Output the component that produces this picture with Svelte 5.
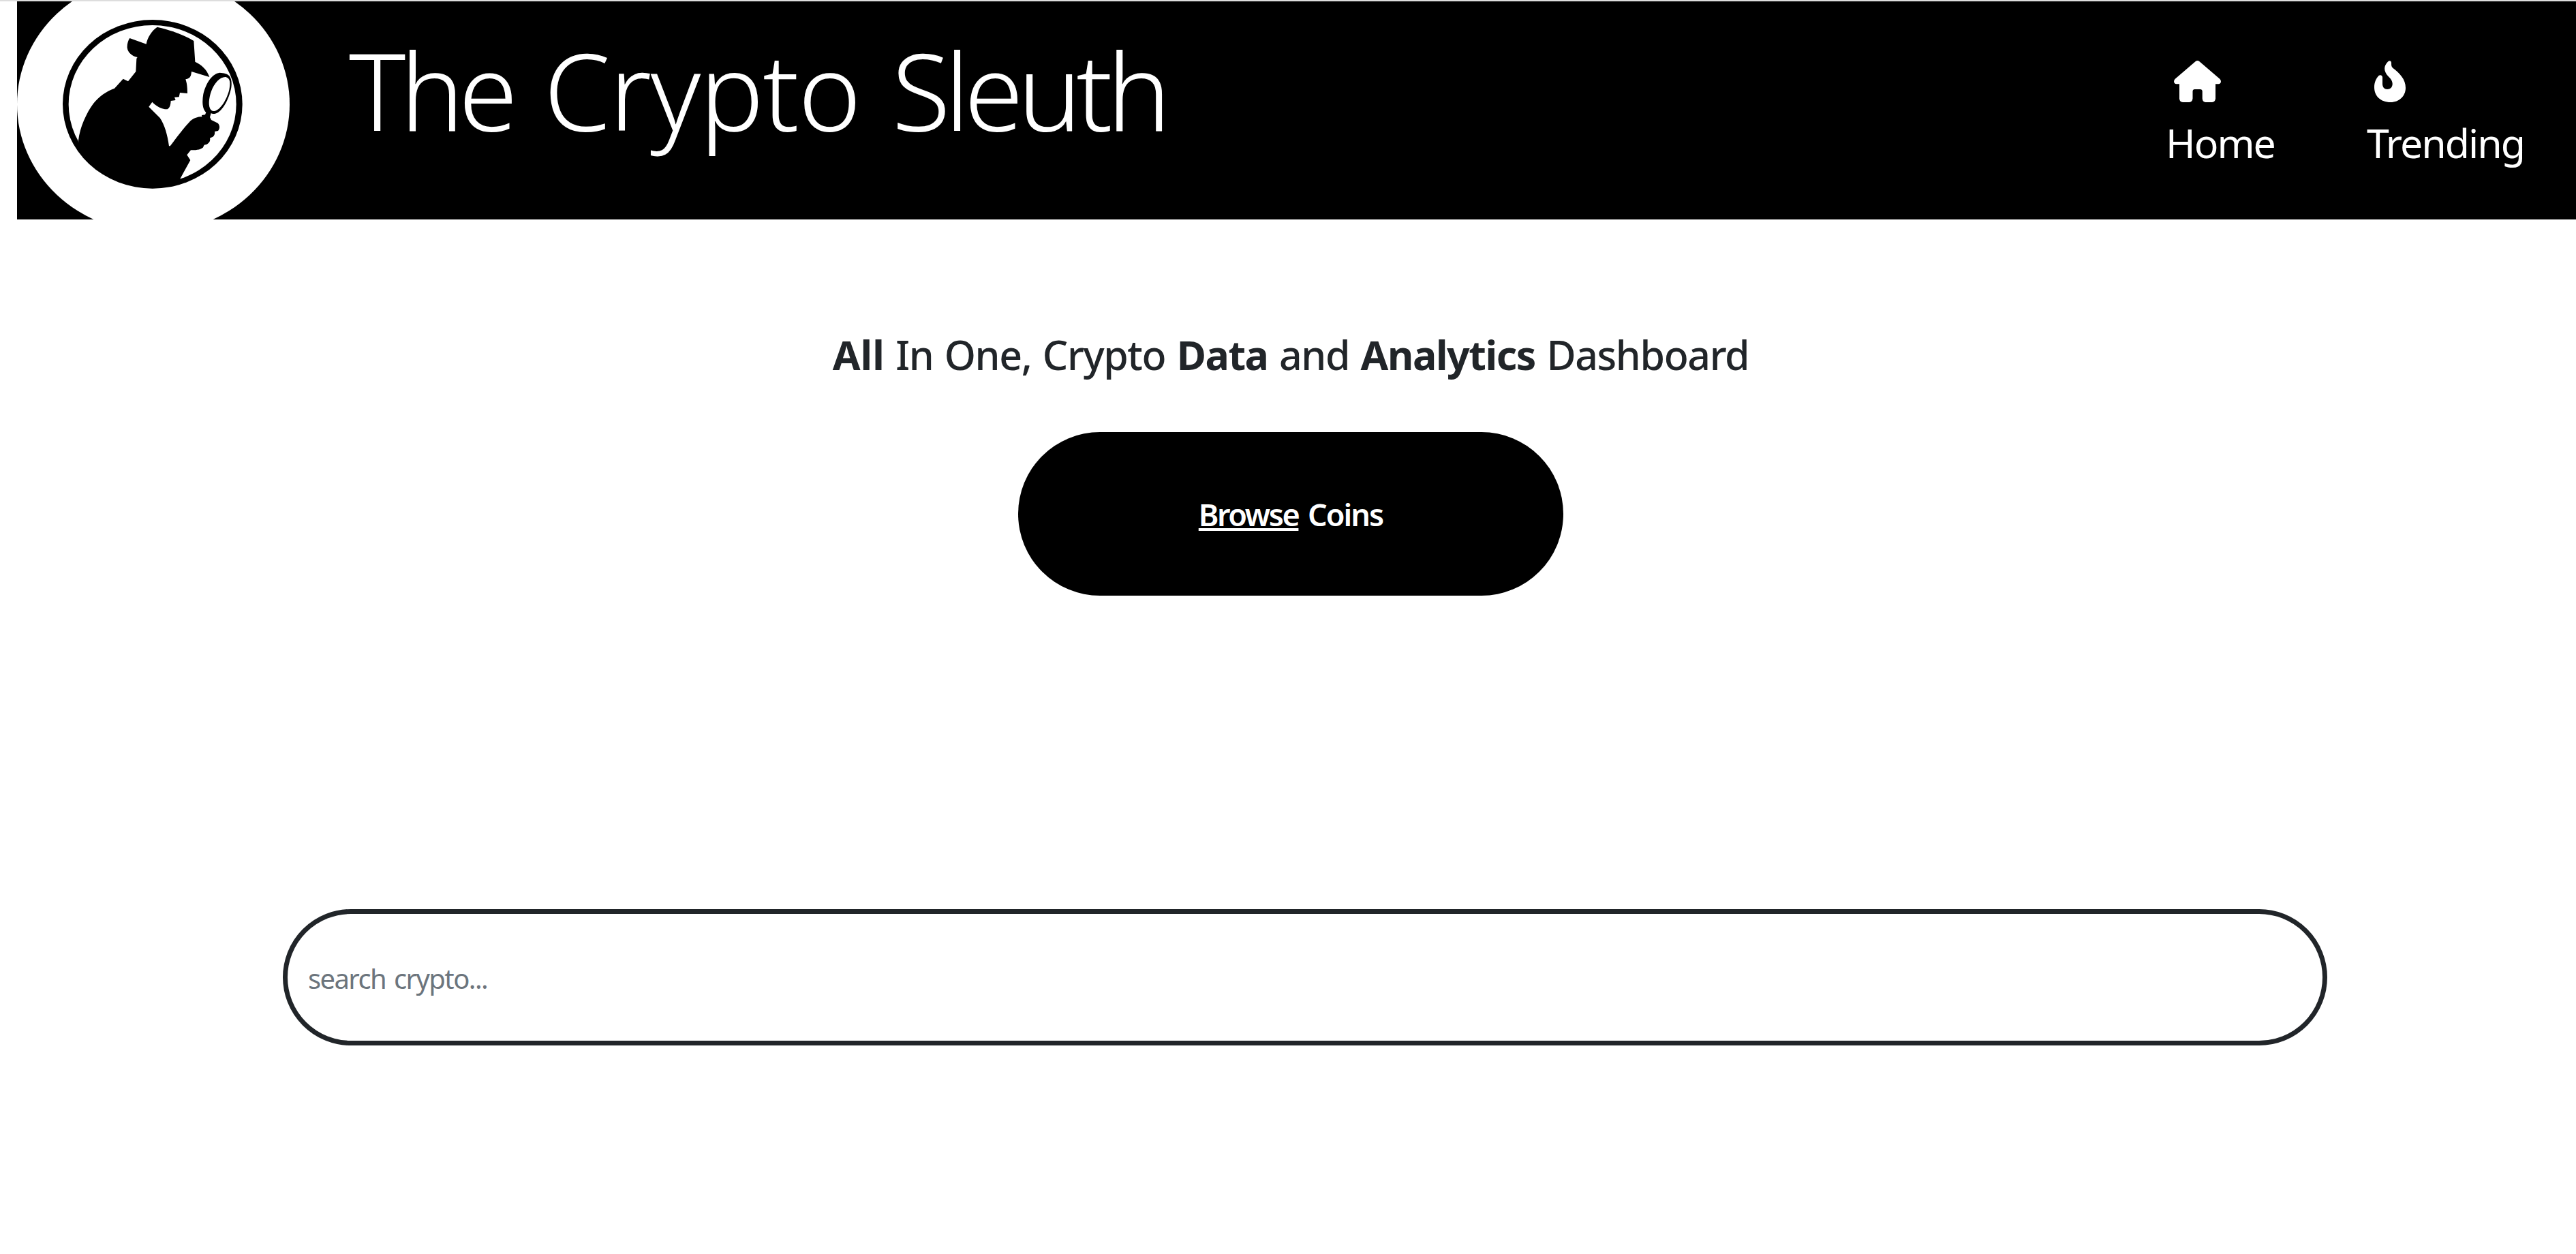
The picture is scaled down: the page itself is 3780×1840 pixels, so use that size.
<script>
  const links = ['Home', 'Trending'];
</script>

<div class="page">
  <header>
    <svg class="logo" viewBox="75 -105 1200 1128" preserveAspectRatio="none" aria-label="Detective">
      <ellipse cx="675" cy="459" rx="600" ry="564" fill="#fff" />
      <ellipse cx="671.500" cy="458.500" rx="395.500" ry="371.500" />
      <ellipse cx="671" cy="459" rx="369" ry="348" fill="#fff" />
      <path d="M345 618 C352 560 380 498 411 456 C436 424 468 402 504 389 L542 347 L564 358 L598 315 L601 258 L605 252 C581 247 563 232 560 210 C559 194 564 178 571 168 L644 194 C649 165 668 135 692 119 C750 132 807 152 853 180 L859 272 C887 285 911 306 922 339 L843 315 C841 332 840 345 817 349 C822 364 825 380 825 411 L792 408 L788 427 L768 428 L773 441 L752 444 C751 461 748 474 737 481 C713 482 686 466 670 449 L655 470 L704 519 C725 550 737 593 744 643 L749 643 C776 607 806 566 832 539 C850 519 870 514 889 514 L888 507 L903 505 L907 495 C889 478 890 443 895 414 C907 365 934 324 967 320 C985 321 1000 324 1009 334 C1022 349 1021 377 1015 399 C1003 447 974 497 945 501 C937 502 933 500 929 498 L924 516 L930 528 L959 542 C968 551 969 566 960 576 L945 579 C947 589 943 602 930 605 L924 608 C927 620 921 629 911 635 L899 638 L893 650 C879 660 859 661 840 661 L823 682 L838 705 L794 785 L790 806 C740 822 670 829 610 820 C520 805 410 744 350 660 Z" />
      <path fill="#fff" d="M930 485 C914 470 920 429 930 402 C943 365 970 337 994 339 C1014 344 1015 366 1009 395 C999 437 972 481 947 488 C940 490 935 489 930 485 Z" />
    </svg>
    <h1><span class="tight">The</span> <span class="wide">Crypto</span> <span class="tight">Sleuth</span></h1>
    <nav>
      {#each links as link, i}
        <a href={'#' + link.toLowerCase()}>
          {#if i === 0}
            <svg class="house" viewBox="0 0 69 61" fill="#fff">
              <path d="M31.500 1.200 Q34.500 -1 37.500 1.200 L67.500 27 Q69 28.500 69 31 Q68.500 34 65.500 34.300 L61 34.300 L61 55.500 Q60.500 60.500 56 61 L46.500 61 Q42 60.500 41.700 55.500 L41.700 45 Q41.500 42 38.500 42 L30.500 42 Q27.700 42 27.500 45 L27.500 55.500 Q27 60.500 22.500 61 L13 61 Q8.300 60.500 8 55.500 L8 34.300 L3.500 34.300 Q.5 34 0 31 Q0 28.500 1.500 27 Z" />
            </svg>
          {:else}
            <svg class="flame" viewBox="0 0 46 61" fill="#fff">
              <path d="M20 1.500 C22 -.7 24.800 -.2 25 3 C25.200 6 24.500 8 27.500 11 C37 18.500 46 27 46 40 C46 52 36.500 61 24 61 C9 61 0 51.500 0 39 C0 32 2.500 26.500 6.500 22 C9 20.200 12 21.500 12 24.500 L12 34 C12 39 15 42 19 42 C23.500 42 26.700 39 26.700 34 C26.700 29.500 24 26.500 20.500 23 C13.500 15.500 13.500 8 20 1.500 Z" />
            </svg>
          {/if}
          <span>{link}</span>
        </a>
      {/each}
    </nav>
  </header>

  <main>
    <h2><b class="loose">All</b> In One, Crypto <b>Data</b> and <b>Analytics</b> Dashboard</h2>
    <button><u>Browse</u> Coins</button>
    <input type="text" placeholder="search crypto..." />
  </main>
</div>

<style>
  :global(body) {
    margin: 0;
    background: #fff;
  }
  .page {
    box-sizing: border-box;
    height: 1840px;
    overflow: hidden;
    border-top: 2px solid #ddd;
    font-family: 'Noto Sans', 'Open Sans', sans-serif;
    color: #212529;
  }
  header {
    display: flex;
    align-items: flex-start;
    height: 320px;
    margin-left: 25px;
    overflow: hidden;
    background: #000;
    color: #fff;
  }
  .logo {
    flex: none;
    width: 400px;
    height: 376px;
    margin-top: -37px;
  }
  h1 {
    margin: 35px 0 0 87px;
    font-size: 157px;
    line-height: 188px;
    font-weight: 300;
    font-kerning: none;
    word-spacing: 5.5px;
    white-space: nowrap;
  }
  .tight {
    letter-spacing: -8px;
  }
  .wide {
    letter-spacing: -1.5px;
  }
  nav {
    display: grid;
    grid-template-columns: 295px 308px;
    margin: 87px 0 0 auto;
  }
  a {
    display: flex;
    flex-direction: column;
    color: inherit;
    text-decoration: none;
    font-size: 59px;
    line-height: 80px;
    letter-spacing: -2px;
  }
  a span {
    margin: 19px 0 0 1px;
  }
  .house {
    width: 69px;
    height: 61px;
    margin-left: 13px;
  }
  .flame {
    width: 46px;
    height: 61px;
    margin-left: 12px;
  }
  main {
    display: flex;
    flex-direction: column;
    align-items: center;
  }
  h2 {
    margin: 158px 0 0 8px;
    font-size: 59px;
    line-height: 80px;
    font-weight: 500;
    white-space: nowrap;
    letter-spacing: -1.4px;
    word-spacing: 2.500px;
  }
  h2 b {
    font-weight: 700;
  }
  .loose {
    letter-spacing: 0;
  }
  button {
    width: 800px;
    height: 240px;
    margin: 74px 0 0 8px;
    padding: 2px 0 0;
    border: 0;
    border-radius: 120px;
    background: #000;
    color: #fff;
    font: 600 45px/60px 'Noto Sans', 'Open Sans', sans-serif;
    letter-spacing: -2px;
    word-spacing: 4px;
  }
  u {
    letter-spacing: -2.4px;
    text-decoration-thickness: 4px;
    text-underline-offset: 3px;
    text-decoration-skip-ink: none;
  }
  input {
    box-sizing: border-box;
    width: 3000px;
    height: 200px;
    margin: 460px 0 0 50px;
    padding: 2px 30px 0;
    border: 7px solid #212529;
    border-radius: 100px;
    background: #fff;
    font: 400 40px/60px 'Noto Sans', 'Open Sans', sans-serif;
    letter-spacing: -1.6px;
    word-spacing: 3px;
  }
  input::placeholder {
    color: #6c757d;
    opacity: 1;
  }
</style>
